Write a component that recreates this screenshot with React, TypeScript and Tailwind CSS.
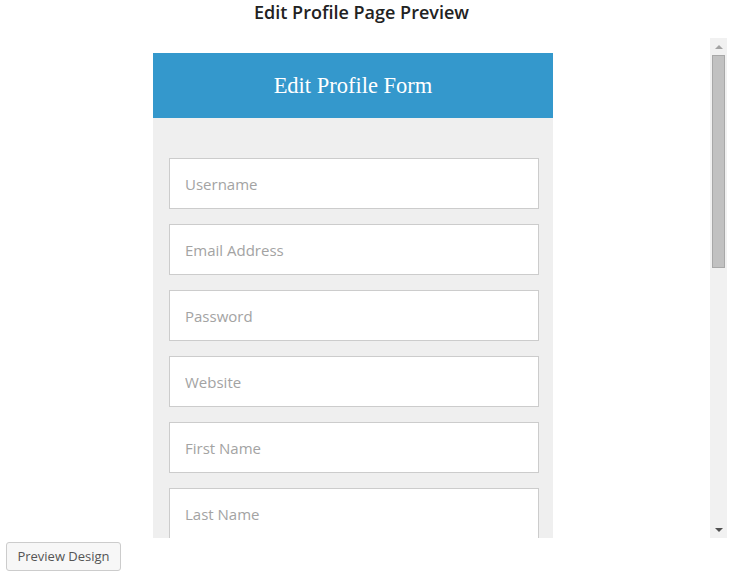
const fields = ["Username", "Email Address", "Password", "Website", "First Name", "Last Name", "Bio"];

export default function App() {
  return (
    <div className="w-[733px] h-[573px] bg-white font-['Open_Sans',sans-serif] overflow-hidden">
      {/* Title */}
      <div className="w-[723px] h-[38px] flex justify-center">
        <h1 className="text-[18px] font-semibold text-[#222] leading-[24px]">Edit Profile Page Preview</h1>
      </div>

      {/* Preview frame */}
      <div className="flex w-[727px] h-[500px]">
        <div className="w-[710px] h-full overflow-hidden">
          <div className="ml-[153px] mt-[15px] w-[400px]">
            <div className="h-[65px] bg-[#3498cc] flex items-center justify-center">
              <span className="font-['Liberation_Serif',serif] text-[22.5px] text-white">Edit Profile Form</span>
            </div>
            <div className="bg-[#efefef] pl-[16px] pr-[14px] pt-[40px] pb-[40px] flex flex-col gap-[15px]">
              {fields.map((f) => (
                <input
                  key={f}
                  placeholder={f}
                  className="h-[51px] w-full bg-white border border-[#cccccc] px-[15px] text-[15px] outline-none placeholder:text-[#a3a3a3]"
                />
              ))}
            </div>
          </div>
        </div>

        {/* Scrollbar */}
        <div className="w-[17px] h-full bg-[#f1f1f1] flex flex-col items-center">
          <div className="h-[17px] flex items-center justify-center">
            <div className="w-0 h-0 border-l-[4px] border-r-[4px] border-b-[4px] border-l-transparent border-r-transparent border-b-[#a3a3a3]" />
          </div>
          <div className="w-[13px] h-[213px] bg-[#c1c1c1] border border-[#a8a8a8]" />
          <div className="flex-1" />
          <div className="h-[17px] flex items-center justify-center">
            <div className="w-0 h-0 border-l-[4px] border-r-[4px] border-t-[4px] border-l-transparent border-r-transparent border-t-[#505050]" />
          </div>
        </div>
      </div>

      {/* Footer button */}
      <div className="pl-[6px] pt-[4px]">
        <button className="h-[29px] w-[115px] border border-[#cccccc] rounded-[3px] bg-[#f7f7f7] text-[13px] text-[#555]">
          Preview Design
        </button>
      </div>
    </div>
  );
}
